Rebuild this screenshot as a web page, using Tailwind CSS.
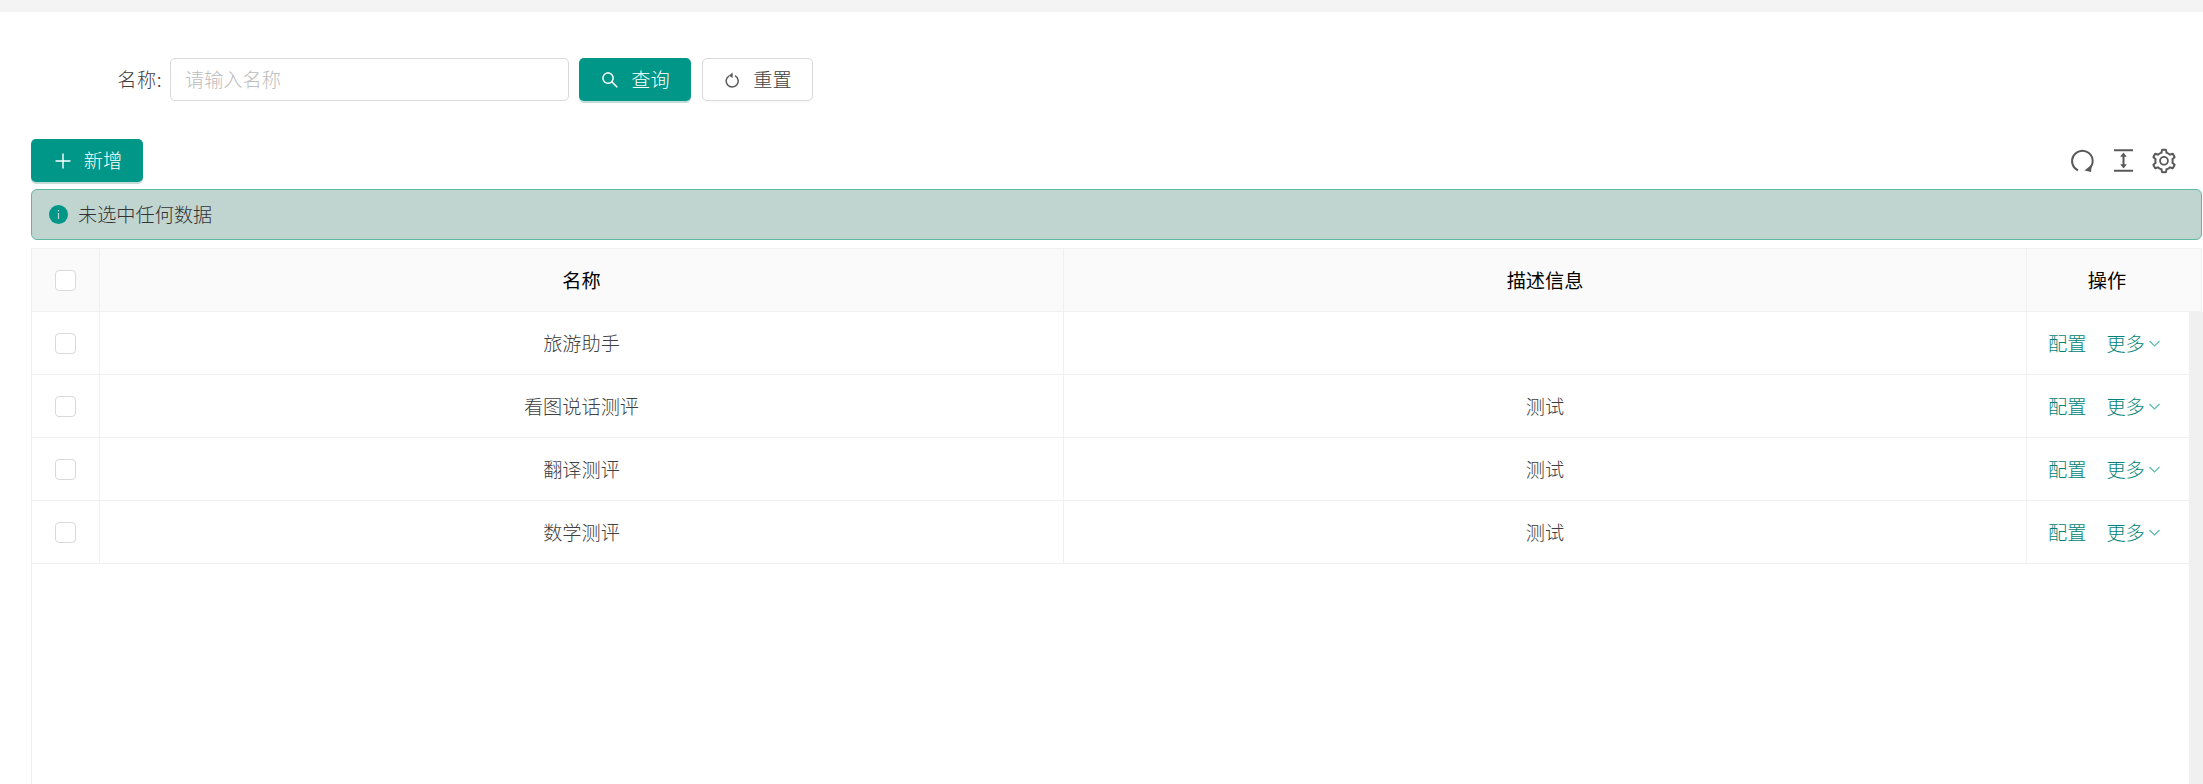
<!DOCTYPE html>
<html lang="zh-CN">

<head>
    <meta charset="UTF-8">
    <title>测评管理</title>
    <script src="https://cdn.jsdelivr.net/npm/@tailwindcss/browser@4"></script>
</head>

<body class="h-[784px] overflow-hidden bg-white font-['Noto_Sans_CJK_SC','Liberation_Sans',sans-serif] text-[19.2px] font-light text-[#404040]">
    <div class="h-[12px] bg-[#f4f4f4]"></div>

    <div class="flex h-[772px] flex-col pl-[31px] pr-[1px]">
        <!-- 搜索栏 -->
        <form class="mt-[46px] flex h-[43px] items-stretch">
            <label class="flex w-[131px] items-center justify-end tracking-[0.5px]">名称:</label>
            <div class="ml-[8px] flex w-[399px] items-center rounded-[5px] border border-[#d9d9d9] px-[14px] text-[#bdbdbd]">请输入名称</div>
            <button type="button" class="ml-[10px] flex w-[112px] items-center justify-center gap-[11px] rounded-[5px] bg-[#009688] text-white shadow-[0_2px_0_#c5dbd7]">
                <svg class="h-[20px] w-[20px]" viewBox="0 0 1024 1024" fill="currentColor"><path d="M909.6 854.5L649.9 594.8C690.2 542.7 712 479 712 412.3c0-79.8-31.2-154.7-87.6-211.1-56.4-56.4-131.4-87.6-211.1-87.6s-154.8 31.3-211.1 87.6c-56.4 56.3-87.6 131.3-87.6 211.1 0 79.7 31.2 154.8 87.6 211.1 56.4 56.4 131.4 87.6 211.1 87.6 66.7 0 130.3-21.8 182.4-62l259.7 259.6a8.2 8.2 0 0 0 11.6 0l43.6-43.5a8.2 8.2 0 0 0 0-11.6zM570.4 570.4c-42.4 42.3-98.6 65.6-158.4 65.6s-116-23.3-158.3-65.6c-42.3-42.4-65.7-98.6-65.7-158.4s23.4-116.1 65.7-158.4c42.3-42.3 98.5-65.6 158.3-65.6s116.1 23.2 158.4 65.6c42.3 42.4 65.6 98.6 65.6 158.4s-23.3 116.1-65.6 158.4z"/></svg>
                查询
            </button>
            <button type="button" class="ml-[11px] flex w-[111px] items-center justify-center gap-[14px] rounded-[5px] border border-[#d9d9d9] pl-[2px] shadow-[0_2px_0_rgba(0,0,0,0.02)]">
                <svg class="h-[16px] w-[14px] text-[#595959]" viewBox="0 0 14 16" fill="none" stroke="currentColor" stroke-width="1.5"><path d="M4.2 3.8a6 6 0 1 0 5.8-.1"/><path d="M7.6 .6 L4 3.4 L7.6 6 Z" fill="currentColor" stroke="none"/></svg>
                重置
            </button>
        </form>

        <!-- 工具栏 -->
        <div class="mt-[38px] flex h-[43px] items-center justify-between">
            <button type="button" class="flex h-full w-[112px] items-center justify-center gap-[13px] rounded-[5px] bg-[#009688] pl-[3px] text-white shadow-[0_2px_0_#c5dbd7]">
                <svg class="h-[16px] w-[16px]" viewBox="0 0 16 16" fill="none" stroke="currentColor" stroke-width="1.4"><path d="M8 .5v15M.5 8h15"/></svg>
                新增
            </button>
            <div class="mr-[24px] flex items-center text-[#595959]">
                <svg class="h-[24px] w-[24px]" viewBox="0 0 24 24" fill="none" stroke="currentColor" stroke-width="2"><path d="M8 21.4A10.3 10.3 0 1 1 19.5 19.5"/><path d="M21.8 15.5 L21 23 L14.5 21.5 Z" fill="currentColor" stroke="none"/></svg>
                <svg class="ml-[15px] h-[29px] w-[29px]" viewBox="0 0 1024 1024" fill="currentColor"><path d="M840 836H184c-4.4 0-8 3.6-8 8v60c0 4.4 3.6 8 8 8h656c4.4 0 8-3.6 8-8v-60c0-4.4-3.6-8-8-8zm0-724H184c-4.4 0-8 3.6-8 8v60c0 4.4 3.6 8 8 8h656c4.4 0 8-3.6 8-8v-60c0-4.4-3.6-8-8-8zM610.8 378c6 0 9.4-7 5.7-11.7L515.7 238.7a7.14 7.14 0 0 0-11.3 0L403.6 366.3a7.23 7.23 0 0 0 5.7 11.7H476v268h-62.8c-6 0-9.4 7-5.7 11.7l100.8 127.5c2.9 3.7 8.5 3.7 11.3 0l100.8-127.5c3.7-4.7.4-11.7-5.7-11.7H548V378h62.8z"/></svg>
                <svg class="ml-[12px] h-[28px] w-[28px]" viewBox="0 0 1024 1024" fill="currentColor"><path d="M924.8 625.7l-65.5-56c3.1-19 4.7-38.4 4.7-57.8s-1.6-38.8-4.7-57.8l65.5-56a32.03 32.03 0 0 0 9.3-35.2l-.9-2.6a443.74 443.74 0 0 0-79.7-137.9l-1.8-2.1a32.12 32.12 0 0 0-35.1-9.5l-81.3 28.9c-30-24.6-63.5-44-99.7-57.6l-15.7-85a32.05 32.05 0 0 0-25.8-25.7l-2.7-.5c-52.1-9.4-106.9-9.4-159 0l-2.7.5a32.05 32.05 0 0 0-25.8 25.7l-15.8 85.4a351.86 351.86 0 0 0-99 57.4l-81.9-29.1a32 32 0 0 0-35.1 9.5l-1.8 2.1a446.02 446.02 0 0 0-79.7 137.9l-.9 2.6c-4.5 12.5-.8 26.5 9.3 35.2l66.3 56.6c-3.1 18.8-4.6 38-4.6 57.1 0 19.2 1.5 38.4 4.6 57.1L99 625.5a32.03 32.03 0 0 0-9.3 35.2l.9 2.6c18.1 50.4 44.9 96.9 79.7 137.9l1.8 2.1a32.12 32.12 0 0 0 35.1 9.5l81.9-29.1c29.8 24.5 63.1 43.9 99 57.4l15.8 85.4a32.05 32.05 0 0 0 25.8 25.7l2.7.5a449.4 449.4 0 0 0 159 0l2.7-.5a32.05 32.05 0 0 0 25.8-25.7l15.7-85a350 350 0 0 0 99.7-57.6l81.3 28.9a32 32 0 0 0 35.1-9.5l1.8-2.1c34.8-41.1 61.6-87.5 79.7-137.9l.9-2.6c4.5-12.3.8-26.3-9.3-35zM788.3 465.9c2.5 15.1 3.8 30.6 3.8 46.1s-1.3 31-3.8 46.1l-6.6 40.1 74.7 63.9a370.03 370.03 0 0 1-42.6 73.6L721 702.8l-31.4 25.8c-23.9 19.6-50.5 35-79.3 45.8l-38.1 14.3-17.9 97a377.5 377.5 0 0 1-85 0l-17.9-97.2-37.8-14.5c-28.5-10.8-55-26.2-78.7-45.7l-31.4-25.9-93.4 33.2c-17-22.9-31.2-47.6-42.6-73.6l75.5-64.5-6.5-40c-2.4-14.9-3.7-30.3-3.7-45.5 0-15.3 1.2-30.6 3.7-45.5l6.5-40-75.5-64.5c11.3-26.1 25.6-50.7 42.6-73.6l93.4 33.2 31.4-25.9c23.7-19.5 50.2-34.9 78.7-45.7l37.9-14.3 17.9-97.2c28.1-3.2 56.8-3.2 85 0l17.9 97 38.1 14.3c28.7 10.8 55.4 26.2 79.3 45.8l31.4 25.8 92.8-32.9c17 22.9 31.2 47.6 42.6 73.6L781.8 426l6.5 39.9zM512 326c-97.2 0-176 78.8-176 176s78.8 176 176 176 176-78.8 176-176-78.8-176-176-176zm79.2 255.2A111.6 111.6 0 0 1 512 614c-29.9 0-58-11.7-79.2-32.8A111.6 111.6 0 0 1 400 502c0-29.9 11.7-58 32.8-79.2C454 401.6 482.1 390 512 390c29.9 0 58 11.6 79.2 32.8A111.6 111.6 0 0 1 624 502c0 29.9-11.7 58-32.8 79.2z"/></svg>
            </div>
        </div>

        <!-- 选中提示 -->
        <div class="mt-[7px] flex h-[51px] items-center gap-[10px] rounded-[6px] border border-[#5fb8a3] bg-[#c1d5d0] pl-[17px] text-[#333333]">
            <svg class="h-[19px] w-[19px]" viewBox="0 0 19 19"><circle cx="9.5" cy="9.5" r="9.5" fill="#009688"/><path d="M8.9 8h1.2v6H8.9zM8.9 5h1.2v1.6H8.9z" fill="#c1d5d0"/></svg>
            未选中任何数据
        </div>

        <!-- 表格 -->
        <div class="mt-[8px] flex min-h-0 flex-1 flex-col border-l border-[#f0f0f0]">
            <div class="flex h-[64px] border-y border-r border-[#f0f0f0] bg-[#fafafa] font-normal text-black">
                <div class="flex w-[68px] items-center justify-center border-r border-[#f0f0f0]"><span class="h-[21px] w-[21px] rounded-[4px] border border-[#d9d9d9] bg-white"></span></div>
                <div class="flex w-[964px] items-center justify-center border-r border-[#f0f0f0]">名称</div>
                <div class="flex w-[963px] items-center justify-center border-r border-[#f0f0f0]">描述信息</div>
                <div class="flex flex-1 items-center justify-center pr-[14px]">操作</div>
            </div>
            <div class="flex min-h-0 flex-1">
                <div id="rows" class="w-[2157px]"></div>
                <div class="mr-[-1px] flex-1 bg-[#f0f0f0]"></div>
            </div>
        </div>
    </div>

    <script>
const rows = [
    { name: '旅游助手', desc: '' },
    { name: '看图说话测评', desc: '测试' },
    { name: '翻译测评', desc: '测试' },
    { name: '数学测评', desc: '测试' }
]

document.getElementById('rows').innerHTML = rows.map(row => `
    <div class="flex h-[63px] border-b border-[#f0f0f0]">
        <div class="flex w-[68px] items-center justify-center border-r border-[#f0f0f0]"><span class="h-[21px] w-[21px] rounded-[4px] border border-[#d9d9d9] bg-white"></span></div>
        <div class="flex w-[964px] items-center justify-center border-r border-[#f0f0f0]">${row.name}</div>
        <div class="flex w-[963px] items-center justify-center border-r border-[#f0f0f0]">${row.desc}</div>
        <div class="flex flex-1 items-center pl-[21px] text-[#008377]">
            <a>配置</a>
            <a class="ml-[20px]">更多</a>
            <svg class="ml-[4px] h-[7px] w-[11px] text-[#5cbcb0]" viewBox="0 0 11 7" fill="none" stroke="currentColor" stroke-width="1.2"><path d="M.5 1 5.5 6l5-5"/></svg>
        </div>
    </div>
`).join('')
    </script>
</body>

</html>
